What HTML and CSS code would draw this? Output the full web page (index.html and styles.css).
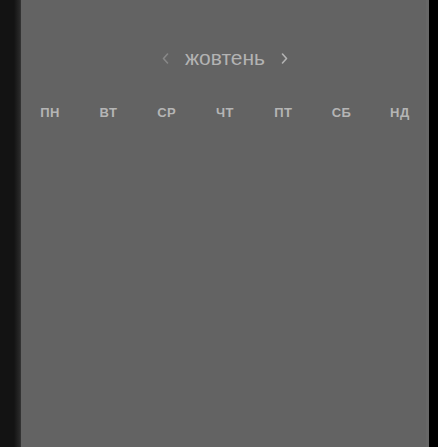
FILE: index.html
```html
<!DOCTYPE html>
<html lang="uk">
<head>
<meta charset="utf-8">
<link rel="stylesheet" href="styles.css">
</head>
<body>
<div class="screen">
  <div class="side-left"></div>
  <div class="panel">
    <div class="month-bar">
      <span class="chev chev-prev">
        <svg width="7" height="11" viewBox="0 0 7 11"><path d="M5.5 1 L1.5 5.5 L5.5 10" fill="none" stroke="currentColor" stroke-width="1.6" stroke-linecap="round" stroke-linejoin="round"/></svg>
      </span>
      <span class="month">жовтень</span>
      <span class="chev chev-next">
        <svg width="7" height="11" viewBox="0 0 7 11"><path d="M1.5 1 L5.5 5.5 L1.5 10" fill="none" stroke="currentColor" stroke-width="1.6" stroke-linecap="round" stroke-linejoin="round"/></svg>
      </span>
    </div>
    <div class="weekdays">
      <span>ПН</span><span>ВТ</span><span>СР</span><span>ЧТ</span><span>ПТ</span><span>СБ</span><span>НД</span>
    </div>
  </div>
  <div class="side-right"></div>
</div>
</body>
</html>
```
FILE: styles.css
```css
html, body {
  margin: 0;
  padding: 0;
  background: #000;
}
.screen {
  display: flex;
  width: 438px;
  height: 447px;
  overflow: hidden;
  font-family: "Liberation Sans", Arial, sans-serif;
}
.side-left {
  width: 21px;
  flex: none;
  background: linear-gradient(to right, #131313 0, #131313 14px, #2a2a2a 20px, #3a3a3a 21px);
}
.panel {
  width: 408px;
  flex: none;
  background: #636363;
  box-shadow: inset -3px 0 0 #676767;
  display: flex;
  flex-direction: column;
}
.side-right {
  flex: 1;
  background: #000;
}
.month-bar {
  display: flex;
  justify-content: center;
  align-items: center;
  gap: 16px;
  margin-top: 45px;
  height: 26px;
}
.month {
  font-size: 21px;
  color: #b3b3b3;
}
.chev {
  display: flex;
  align-items: center;
}
.chev-prev { color: #888; }
.chev-next { color: #b3b3b3; }
.weekdays {
  display: grid;
  grid-template-columns: repeat(7, 1fr);
  margin-top: 34px;
  font-size: 13px;
  font-weight: bold;
  letter-spacing: 0.4px;
  color: #b5b5b5;
  text-align: center;
}
```
